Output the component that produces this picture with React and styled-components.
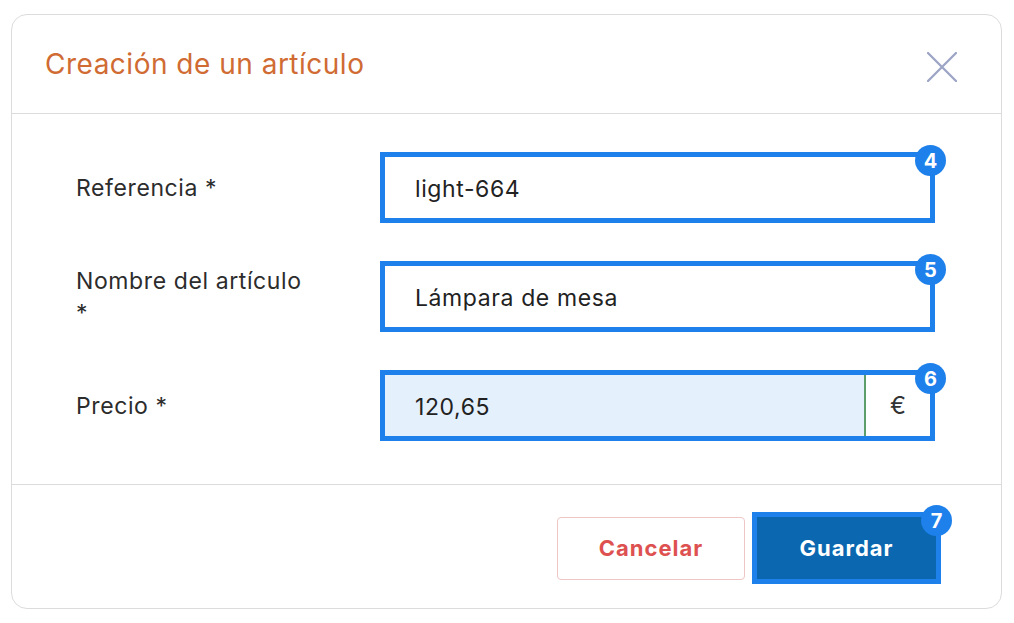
import React from 'react';
import styled, { createGlobalStyle } from 'styled-components';

const fields = [
  { id: 4, label: ['Referencia *'], value: 'light-664' },
  { id: 5, label: ['Nombre del artículo', '*'], value: 'Lámpara de mesa' },
  { id: 6, label: ['Precio *'], value: '120,65', addon: '€', filled: true },
];

const App = () => {
  return (
    <>
      <GlobalStyle />
      <Page>
        <Card>
          <Header>
            <Title>Creación de un artículo</Title>
            <CloseButton aria-label="Cerrar">
              <svg width="30" height="30" viewBox="0 0 30 30">
                <path d="M1 1 L29 29 M29 1 L1 29" stroke="#9ca5c6" strokeWidth="2.3" strokeLinecap="round" />
              </svg>
            </CloseButton>
          </Header>
          <Body>
            {fields.map((f) => (
              <FieldRow key={f.id}>
                <Label>
                  {f.label.map((line, i) => (
                    <span key={i}>
                      {i > 0 && <br />}
                      {line}
                    </span>
                  ))}
                </Label>
                <Highlight>
                  <InputBox $filled={f.filled}>
                    <InputText>{f.value}</InputText>
                    {f.addon && <Addon>{f.addon}</Addon>}
                  </InputBox>
                  <Badge>{f.id}</Badge>
                </Highlight>
              </FieldRow>
            ))}
          </Body>
          <Footer>
            <CancelButton>Cancelar</CancelButton>
            <Highlight $button>
              <SaveButton>Guardar</SaveButton>
              <Badge>7</Badge>
            </Highlight>
          </Footer>
        </Card>
      </Page>
    </>
  );
};

const GlobalStyle = createGlobalStyle`
  * {
    box-sizing: border-box;
  }
  body {
    margin: 0;
    background: #fff;
    font-family: Inter, "Noto Sans", sans-serif;
    color: #2c2c2c;
  }
`;

const Page = styled.div`
  padding: 14px 12px 14px 11px;
`;

const Card = styled.div`
  height: 595px;
  display: flex;
  flex-direction: column;
  border: 1px solid #dcdcdc;
  border-radius: 16px;
  background: #fff;
`;

const Header = styled.header`
  height: 99px;
  display: flex;
  align-items: center;
  justify-content: space-between;
  padding: 0 44px 0 33px;
  border-bottom: 1px solid #dcdcdc;
`;

const Title = styled.h2`
  margin: 0;
  font-size: 28px;
  font-weight: 400;
  letter-spacing: 0.5px;
  color: #cf6b33;
`;

const CloseButton = styled.button`
  display: flex;
  padding: 0;
  margin-top: 5px;
  border: none;
  background: none;
  cursor: pointer;
`;

const Body = styled.div`
  flex: 1;
  display: flex;
  flex-direction: column;
  gap: 38px;
  padding: 38px 0 0 64px;
  border-bottom: 1px solid #dcdcdc;
`;

const FieldRow = styled.div`
  display: grid;
  grid-template-columns: 304px 555px;
  align-items: center;
`;

const Label = styled.label`
  font-size: 23px;
  line-height: 32px;
  letter-spacing: 0.6px;
  color: #2c2c2c;
`;

const Highlight = styled.div`
  position: relative;
  height: ${(p) => (p.$button ? '72px' : '71px')};
  border: 5px solid #1e80ea;
`;

const InputBox = styled.div`
  height: 100%;
  display: flex;
  align-items: center;
  background: ${(p) => (p.$filled ? '#e5f0fd' : '#fff')};
`;

const InputText = styled.span`
  flex: 1;
  padding: 2px 0 0 30px;
  font-size: 23px;
  letter-spacing: 0.6px;
  color: #222;
`;

const Addon = styled.span`
  width: 66px;
  height: 100%;
  display: flex;
  align-items: center;
  justify-content: center;
  border-left: 2px solid #5c9e6c;
  background: #fff;
  font-size: 24px;
  color: #333;
`;

const Badge = styled.span`
  position: absolute;
  top: -12px;
  right: -16px;
  width: 31px;
  height: 31px;
  border-radius: 50%;
  display: flex;
  align-items: center;
  justify-content: center;
  background: #1e80ea;
  color: #fff;
  font-size: 20px;
  font-weight: 700;
`;

const Footer = styled.footer`
  height: 123px;
  display: flex;
  align-items: center;
  justify-content: flex-end;
  gap: 7px;
  padding: 3px 60px 0 0;
`;

const CancelButton = styled.button`
  width: 188px;
  height: 63px;
  border: 1px solid #efc6c6;
  border-radius: 4px;
  background: #fff;
  color: #de5151;
  font-family: inherit;
  font-size: 22px;
  font-weight: 700;
  letter-spacing: 1px;
  cursor: pointer;
`;

const SaveButton = styled.button`
  width: 179px;
  height: 62px;
  border: none;
  background: #0a67b0;
  color: #fff;
  font-family: inherit;
  font-size: 22px;
  font-weight: 700;
  letter-spacing: 1px;
  cursor: pointer;
`;

export default App;
